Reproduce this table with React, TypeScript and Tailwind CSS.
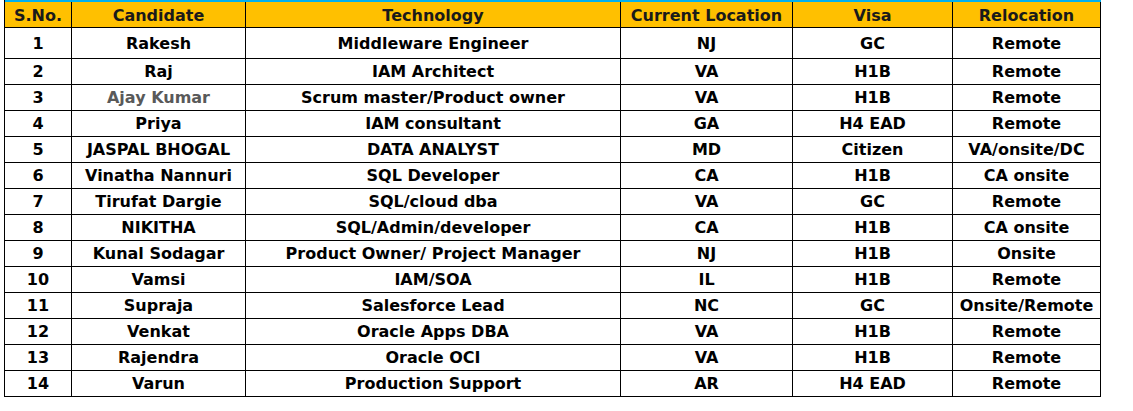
import React from "react"

type Row = {
  no: number
  name: string
  tech: string
  loc: string
  visa: string
  reloc: string
  muted?: boolean
}

const rows: Row[] = [
  { no: 1, name: "Rakesh", tech: "Middleware Engineer", loc: "NJ", visa: "GC", reloc: "Remote" },
  { no: 2, name: "Raj", tech: "IAM Architect", loc: "VA", visa: "H1B", reloc: "Remote" },
  { no: 3, name: "Ajay Kumar", tech: "Scrum master/Product owner", loc: "VA", visa: "H1B", reloc: "Remote", muted: true },
  { no: 4, name: "Priya", tech: "IAM consultant", loc: "GA", visa: "H4 EAD", reloc: "Remote" },
  { no: 5, name: "JASPAL BHOGAL", tech: "DATA ANALYST", loc: "MD", visa: "Citizen", reloc: "VA/onsite/DC" },
  { no: 6, name: "Vinatha Nannuri", tech: "SQL Developer", loc: "CA", visa: "H1B", reloc: "CA onsite" },
  { no: 7, name: "Tirufat Dargie", tech: "SQL/cloud dba", loc: "VA", visa: "GC", reloc: "Remote" },
  { no: 8, name: "NIKITHA", tech: "SQL/Admin/developer", loc: "CA", visa: "H1B", reloc: "CA onsite" },
  { no: 9, name: "Kunal Sodagar", tech: "Product Owner/ Project Manager", loc: "NJ", visa: "H1B", reloc: "Onsite" },
  { no: 10, name: "Vamsi", tech: "IAM/SOA", loc: "IL", visa: "H1B", reloc: "Remote" },
  { no: 11, name: "Supraja", tech: "Salesforce Lead", loc: "NC", visa: "GC", reloc: "Onsite/Remote" },
  { no: 12, name: "Venkat", tech: "Oracle Apps DBA", loc: "VA", visa: "H1B", reloc: "Remote" },
  { no: 13, name: "Rajendra", tech: "Oracle OCI", loc: "VA", visa: "H1B", reloc: "Remote" },
  { no: 14, name: "Varun", tech: "Production Support", loc: "AR", visa: "H4 EAD", reloc: "Remote" },
]

const headers = ["S.No.", "Candidate", "Technology", "Current Location", "Visa", "Relocation"]

const gridCols = "grid grid-cols-[67px_174px_375px_172px_160px_148px]"
const cell = "flex items-center justify-center border-r border-b border-black whitespace-nowrap leading-none"

export default function App() {
  return (
    <div className="w-[1133px] h-[411px] bg-white text-black" style={{ fontFamily: '"DejaVu Sans", Verdana, sans-serif' }}>
      <div className="ml-[4px] w-[1097px] border-l border-black text-[16px] font-bold">
        {/* header */}
        <div className={`${gridCols} bg-[#ffc000] border-t-2 border-[#00b0f0]`}>
          {headers.map((h) => (
            <div key={h} className={`${cell} h-[26px] pt-[2px] text-[#1a1a1a]`}>
              {h}
            </div>
          ))}
        </div>

        {rows.map((r) => {
          const h = r.no === 1 ? "h-[31px] pt-[2px]" : "h-[26px] pt-[1px]"
          return (
            <div key={r.no} className={gridCols}>
              <div className={`${cell} ${h}`}>{r.no}</div>
              <div className={`${cell} ${h} ${r.muted ? "text-[#595959]" : ""}`}>{r.name}</div>
              <div className={`${cell} ${h}`}>{r.tech}</div>
              <div className={`${cell} ${h}`}>{r.loc}</div>
              <div className={`${cell} ${h}`}>{r.visa}</div>
              <div className={`${cell} ${h}`}>{r.reloc}</div>
            </div>
          )
        })}
      </div>
    </div>
  )
}
